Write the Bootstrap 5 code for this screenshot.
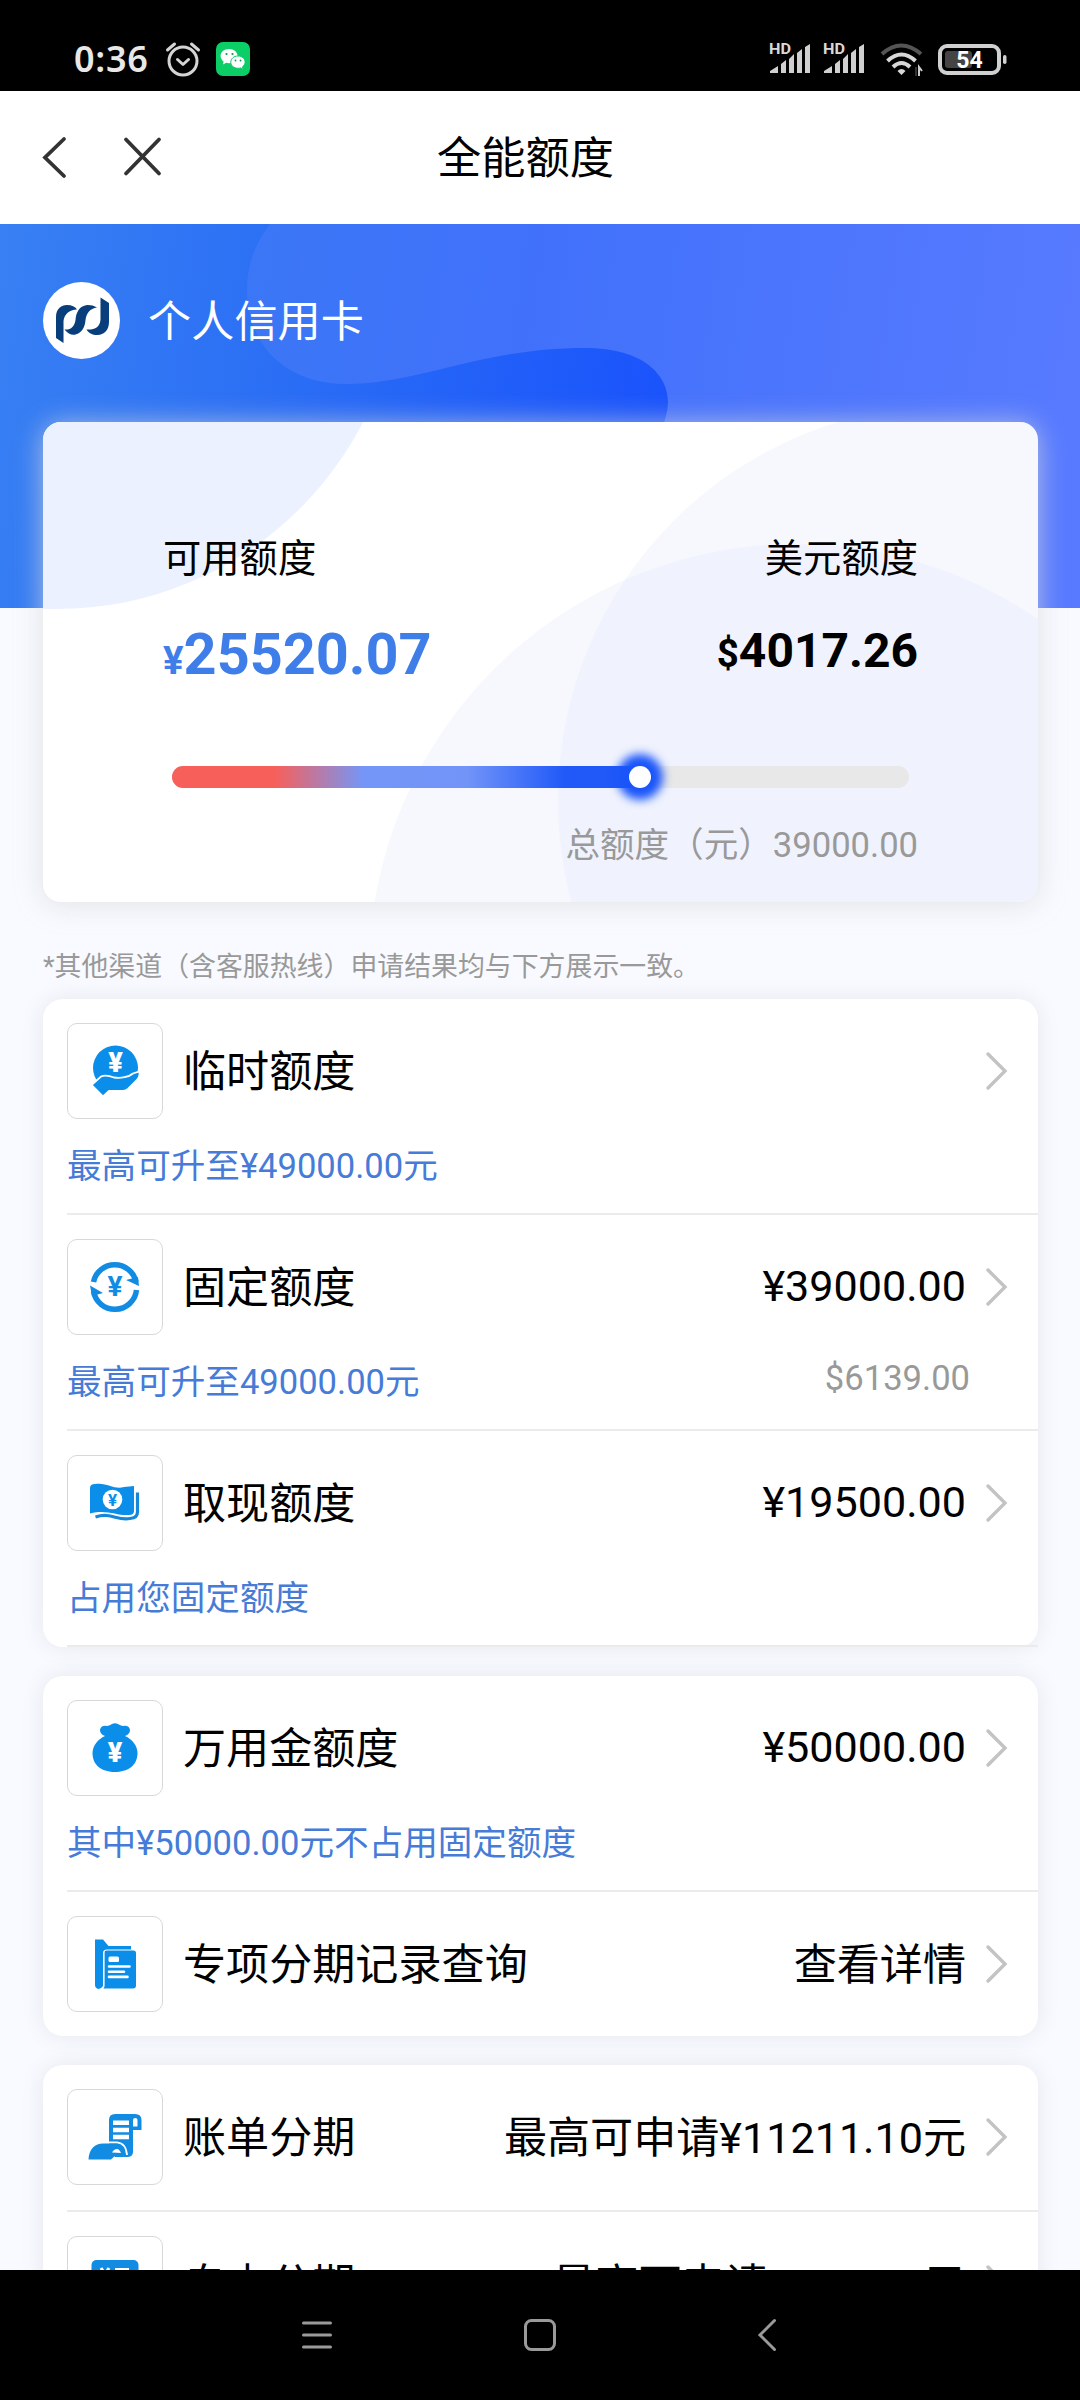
<!DOCTYPE html>
<html lang="zh-CN">
<head>
<meta charset="utf-8">
<meta name="viewport" content="width=device-width, initial-scale=1">
<title>全能额度</title>
<link rel="stylesheet" href="https://cdn.jsdelivr.net/npm/bootstrap@5.3.0/dist/css/bootstrap.min.css">
<style>
  body { font-family: Roboto, "Noto Sans CJK SC", sans-serif; color: #000; background: #f8faff; }
  svg { display: block; flex: none; overflow: visible; }
  .screen { width: 1080px; height: 2400px; }
  .status { height: 91px; padding: 27px 75px 0 74px; }
  .clock { font: 600 36px/36px "Noto Sans", sans-serif; color: #e8e8e8; letter-spacing: .7px; width: 91px; }
  .topbar { height: 133px; padding: 0 40px; }
  .topbar .title { font-size: 44.2px; line-height: 60px; left: 0; right: 29px; top: 38px; }
  .viewport { min-height: 0; }
  .hero { height: 384px; background: linear-gradient(98deg, #3880f3 0%, #2a6df5 28%, #1a53fc 61%, #1a53fc 100%); }
  .hero-wave { left: 0; top: 0; }
  .owner { padding: 58px 43px 0; gap: 28px; font-size: 43.2px; line-height: 81px; }
  .quota { margin: -186px 42px 0 43px; height: 480px; border-radius: 18px; box-shadow: 0 2px 28px rgba(218,218,220,.75); padding: 113px 120px 0; }
  .quota-art { left: 0; top: 0; border-radius: 18px; overflow: hidden; }
  .caption-lg { font-size: 38.3px; line-height: 48px; }
  .sum { line-height: 60px; font-weight: 700; }
  .sum-cny { font-size: 57.6px; color: #3f7ee8; margin-top: 42px; }
  .sum-usd { font-size: 48px; margin-top: 38px; }
  .sum small { font-size: 38.4px; font-weight: 700; }
  .track { height: 22px; margin: 0 9px; border-radius: 11px; background: #e8e8e8; }
  .fill { height: 22px; border-radius: 11px 0 0 11px; background: linear-gradient(90deg, #f7605a 22%, #7496f8 41%, #7294f8 63%, #2059f8 84%); }
  .thumb { width: 22px; height: 22px; border-radius: 50%; background: #fff; right: -11px; top: 0; box-shadow: 0 0 10px 12px #1a55fa; }
  .total { font-size: 34.6px; line-height: 46px; color: #999; margin-top: 34px; }
  .notice { font-size: 26.9px; line-height: 36px; color: #999; margin: 47px 43px 14px; }
  .group { margin: 0 42px 29px 43px; border-radius: 20px; box-shadow: 0 0 24px rgba(0,0,0,.08); padding-left: 24px; }
  .entry { padding-top: 24px; border-bottom: 2px solid #ebebeb; }
  .entry.tall { height: 216px; }
  .entry.short { height: 147px; }
  .entry.last { height: 144px; border-bottom: 0; }
  .entry-main { height: 96px; padding-right: 29px; font-size: 43.1px; }
  .tile { width: 96px; height: 96px; border: 1px solid #d8d8d8; border-radius: 10px; margin-right: 20px; }
  .tile svg { margin: -1px; }
  .entry-main span { line-height: 60px; padding-top: 4px; }
  .entry-main .amount { margin-right: 19px; }
  .entry-main .num { padding-top: 0; }
  .hint { font-size: 34.6px; line-height: 46px; margin-top: 24px; color: #467bd8; padding-right: 68px; }
  .hint .usd { color: #999; line-height: 39px; }
  .navkeys { height: 130px; }
  .navkeys svg { height: 130px; }
</style>
</head>
<body>
<svg width="0" height="0" class="position-absolute">
  <defs>
    <symbol id="chev" viewBox="0 0 24 42"><path d="M3 4L20 21L3 38" fill="none" stroke="#c3c3c3" stroke-width="3.4" stroke-linecap="round"/></symbol>
    <symbol id="bars" viewBox="0 0 42 34">
      <text x="0" y="12" font-family="Roboto" font-weight="700" font-size="15.5" fill="#d8d8d8" textLength="22" lengthAdjust="spacingAndGlyphs">HD</text>
      <path d="M1 31V29L9 24V31zM12 31V22L17 18V31zM20 31V17L25 12V31zM28 31V11L33 7V31zM36 31V5L41 2V31z" fill="#d0d0d0"/>
    </symbol>
  </defs>
</svg>

<div class="screen d-flex flex-column overflow-hidden">
  <div class="status bg-black d-flex align-items-center flex-shrink-0">
    <div class="clock">0:36</div>
    <svg width="36" height="36" viewBox="0 0 36 36" fill="none" stroke="#d4d4d4" stroke-width="3" stroke-linecap="round" stroke-linejoin="round"><circle cx="18" cy="20" r="14"/><path d="M12.500 18.500L18 23.500L23.500 18.500M2.500 9L9.500 3M33.500 9L26.500 3"/></svg>
    <svg style="margin-left:15px" width="34" height="34" viewBox="0 0 34 34"><rect width="34" height="34" rx="7" fill="#0bce66"/>
      <path d="M13 7C8 7 4.600 10 4.600 14c0 2.300 1.300 4.200 3 5.500l-.6 3 3.200-1.700c1 .3 2 .4 3 .4 5 0 8.500-3 8.500-7S18 7 13 7z" fill="#fff"/>
      <path d="M22 14c-4.300 0-7.200 2.700-7.200 6.100S17.700 26.300 22 26.300c.9 0 1.800-.1 2.600-.4l2.500 1.500-.6-2.600c1.600-1.200 2.600-2.800 2.600-4.700C29.100 16.700 26.200 14 22 14z" fill="#fff" stroke="#0bce66" stroke-width="1"/>
      <g fill="#0a9a50"><circle cx="10.500" cy="12" r="1.100"/><circle cx="16.500" cy="12" r="1.100"/><circle cx="19.500" cy="18.500" r=".9"/><circle cx="24.500" cy="18.500" r=".9"/></g></svg>
    <div class="d-flex align-items-center ms-auto">
      <svg width="42" height="34"><use href="#bars"/></svg>
      <svg width="42" height="34" style="margin-left:12px"><use href="#bars"/></svg>
      <svg style="margin-left:15px" width="44" height="34" viewBox="0 0 44 34" fill="none" stroke-width="4">
        <path d="M2 12Q21 -5 41 12" stroke="#555"/><path d="M7.500 19Q21.500 6 35.500 19" stroke="#d8d8d8"/><path d="M13 25Q21.500 17 30 25" stroke="#d8d8d8"/><path d="M21.500 33l-4-4q4-4 8 0z" fill="#d8d8d8"/><path d="M36 25v9" stroke="#444" stroke-width="1.500"/><path d="M39 34V25l3 4" stroke="#ccc" stroke-width="2"/></svg>
      <svg style="margin-left:14px" width="67" height="34" viewBox="0 0 67 34"><rect x="2" y="4" width="59" height="27" rx="7" fill="none" stroke="#d0d0d0" stroke-width="4"/><rect x="7" y="9" width="27" height="17" rx="3" fill="#444"/><rect x="65" y="13" width="3.500" height="9" rx="1.700" fill="#d0d0d0"/>
        <text x="31.500" y="25.500" text-anchor="middle" font-family="Roboto" font-weight="700" font-size="23" fill="#fff">54</text></svg>
    </div>
  </div>

  <header class="topbar bg-white position-relative d-flex align-items-center flex-shrink-0">
    <svg width="28" height="44" viewBox="0 0 28 44"><path d="M24 3L5 21.500L24 40" fill="none" stroke="#333" stroke-width="3.800" stroke-linecap="round"/></svg>
    <svg style="margin-left:54px" width="42" height="42" viewBox="0 0 42 42"><path d="M4 2.500L37 36.500M37 2.500L4 36.500" fill="none" stroke="#333" stroke-width="3.800" stroke-linecap="round"/></svg>
    <div class="title position-absolute text-center">全能额度</div>
  </header>

  <main class="viewport flex-grow-1 overflow-hidden">
    <section class="hero position-relative">
      <svg class="hero-wave position-absolute" width="1080" height="384" viewBox="0 0 1080 384">
        <defs><linearGradient id="wave" x1="240" y1="0" x2="1080" y2="120" gradientUnits="userSpaceOnUse"><stop offset="0" stop-color="#3a77f5"/><stop offset=".35" stop-color="#4171fb"/><stop offset="1" stop-color="#577aff"/></linearGradient></defs>
        <path d="M270 0C252 24 247 45 247 68C248 125 290 160 345 160C420 160 480 124 585 124C645 124 668 152 668 178Q668 190 660 210L620 384H1080V0Z" fill="url(#wave)"/>
      </svg>
      <div class="owner position-relative d-flex text-white">
        <svg width="77" height="77" viewBox="0 0 77 77"><circle cx="38.500" cy="38.500" r="38.500" fill="#fff"/>
          <g fill="#083e7c"><path d="M13 35C13 27 18 23 24 23C29 23 32 24.500 34 27.500C26 28 21.500 32 20.500 39V61L13 56Z"/>
          <path d="M54 25.500C51 23.500 47 22.800 44 23C36 24 33 31 32.500 38C31.500 44.500 28 48 21.500 47.500C25 52 29 53.500 32.500 52.500C39 51 42 45 42.500 38C43.500 31 47 26.500 54 25.500Z"/>
          <path d="M57.500 15.500L66 21V40C66 48 61 53 54.500 53C49 53 45.500 51 43.500 47.500C52 48 57 45 57.500 37.500Z"/></g></svg>
        <div>个人信用卡</div>
      </div>
    </section>

    <section class="quota position-relative bg-white">
      <svg class="quota-art position-absolute" width="995" height="480" viewBox="43 422 995 480">
        <circle cx="57" cy="265" r="344" fill="#ebf1fe"/>
        <circle cx="796" cy="971" r="427" fill="#e6ecfc" fill-opacity=".36"/>
        <circle cx="953" cy="800" r="395" fill="#e6ecfc" fill-opacity=".36"/>
      </svg>
      <div class="position-relative">
        <div class="d-flex justify-content-between" style="height:231px">
          <div><div class="caption-lg">可用额度</div><div class="sum sum-cny"><small>¥</small>25520.07</div></div>
          <div class="text-end"><div class="caption-lg">美元额度</div><div class="sum sum-usd"><small>$</small>4017.26</div></div>
        </div>
        <div class="track"><div class="fill position-relative" style="width:63.500%"><div class="thumb position-absolute"></div></div></div>
        <div class="total text-end">总额度（元）39000.00</div>
      </div>
    </section>

    <p class="notice">*其他渠道（含客服热线）申请结果均与下方展示一致。</p>

    <section class="group bg-white">
      <div class="entry tall">
        <div class="entry-main d-flex align-items-center">
          <div class="tile"><svg width="96" height="96" viewBox="0 0 96 96"><circle cx="48.500" cy="45" r="22.500" fill="#0a8ee9"/><path d="M24.500 62L34 53.500Q39 51.500 47 54.500C54 55.500 62 54 66 50.500L72.500 48.500Q73 54 70 57L61 66Q59 68 56 68H42L36 73.500Z" fill="#0a8ee9" stroke="#fff" stroke-width="1.800"/><text x="48.500" y="49" text-anchor="middle" font-family="Roboto" font-weight="900" font-size="27" fill="#fff">¥</text></svg></div>
          <span>临时额度</span><svg class="ms-auto" width="24" height="42"><use href="#chev"/></svg>
        </div>
        <div class="hint">最高可升至¥49000.00元</div>
      </div>
      <div class="entry tall">
        <div class="entry-main d-flex align-items-center">
          <div class="tile"><svg width="96" height="96" viewBox="0 0 96 96"><g fill="none" stroke="#128ce2" stroke-width="5.500"><path d="M26.500 43A21.700 21.700 0 0 1 69 43"/><path d="M69.500 51A21.700 21.700 0 0 1 26.500 52"/></g><path d="M72 47L59 41L71 38zM23 46.500L36 54L25 57z" fill="#128ce2"/><text x="48" y="57" text-anchor="middle" font-family="Roboto" font-weight="700" font-size="28" fill="#128ce2">¥</text></svg></div>
          <span>固定额度</span><span class="amount num ms-auto">¥39000.00</span><svg width="24" height="42"><use href="#chev"/></svg>
        </div>
        <div class="hint d-flex justify-content-between"><span>最高可升至49000.00元</span><span class="usd">$6139.00</span></div>
      </div>
      <div class="entry tall">
        <div class="entry-main d-flex align-items-center">
          <div class="tile"><svg width="96" height="96" viewBox="0 0 96 96"><path d="M23 33Q23 29 28 29C40 27 47 35 57 32L67 31V56Q67 60 62 60C50 61 40 54 23 58.500Z" fill="#0a8ee9"/><path d="M28.500 62C44 57 50 66 63 63.500Q70.500 63 70.500 57V37.500" fill="none" stroke="#1487da" stroke-width="3.200"/><circle cx="45.500" cy="44.500" r="9.800" fill="#fff"/><text x="45.500" y="50.500" text-anchor="middle" font-family="Roboto" font-weight="700" font-size="17" fill="#0a8ee9">¥</text></svg></div>
          <span>取现额度</span><span class="amount num ms-auto">¥19500.00</span><svg width="24" height="42"><use href="#chev"/></svg>
        </div>
        <div class="hint">占用您固定额度</div>
      </div>
    </section>

    <section class="group bg-white">
      <div class="entry tall">
        <div class="entry-main d-flex align-items-center">
          <div class="tile"><svg width="96" height="96" viewBox="0 0 96 96"><path d="M38 36Q33 34 33 30Q34 25 40 26Q43 25.500 45 24Q48 22.500 51 24Q53 25.500 56 26Q62 25 63 30Q63 34 58 36C65 39 70.500 46 70.500 53C70.500 66 60 72 48 72S25.500 66 25.500 53C25.500 46 31 39 38 36Z" fill="#0a8ee9"/><text x="48" y="61.500" text-anchor="middle" font-family="Roboto" font-weight="900" font-size="27" fill="#fff">¥</text></svg></div>
          <span>万用金额度</span><span class="amount num ms-auto">¥50000.00</span><svg width="24" height="42"><use href="#chev"/></svg>
        </div>
        <div class="hint">其中¥50000.00元不占用固定额度</div>
      </div>
      <div class="entry last">
        <div class="entry-main d-flex align-items-center">
          <div class="tile"><svg width="96" height="96" viewBox="0 0 96 96"><path d="M28 23.500H36L41.500 30H64V35H39Q36 35 36 38V70Q34 73 31.500 73Q28 72 28 69Z" fill="#0a8ee9"/><path d="M37.500 36.500Q37.500 34.500 40 34.500H66.500Q69 34.500 69 37V69.500Q69 72.500 66 72.500H36.500Q37.500 71 37.500 69Z" fill="#0a8ee9"/><path d="M36.600 71V37Q36.600 34 40 34H64" fill="none" stroke="#fff" stroke-width="1.200"/><rect x="41.500" y="40.500" width="10.500" height="5.500" rx="1.500" fill="#fff"/><path d="M42 50.500H62.500M42 55.700H57M42 60.900H60.500" stroke="#fff" stroke-width="2.600" stroke-linecap="round"/></svg></div>
          <span>专项分期记录查询</span><span class="amount ms-auto">查看详情</span><svg width="24" height="42"><use href="#chev"/></svg>
        </div>
      </div>
    </section>

    <section class="group bg-white">
      <div class="entry short">
        <div class="entry-main d-flex align-items-center">
          <div class="tile"><svg width="96" height="96" viewBox="0 0 96 96"><path d="M42 52V31Q42 25 48 25H68Q74.500 25 74.500 31V41H66V63Q66 68 60 68H48L42 60Z" fill="#128ce2"/><path d="M66 37.500V31Q66 29 68.300 29T70.500 31V37.500Z" fill="#fff"/><path d="M46 33.700H62M46 41H62M46 48H62" stroke="#fff" stroke-width="4.600"/><path d="M21.500 70.500C22 60 28 54.500 36 54.500H50Q57 55 58 62V66H49L44 70.500Z" fill="#128ce2"/><path d="M41.500 53.300H50Q59 54 60 66" fill="none" stroke="#fff" stroke-width="1.800"/><path d="M45 63.500Q47 59.500 51 60Q53.500 62 54 64Z" fill="#fff"/></svg></div>
          <span>账单分期</span><span class="amount ms-auto">最高可申请¥11211.10元</span><svg width="24" height="42"><use href="#chev"/></svg>
        </div>
      </div>
      <div class="entry short">
        <div class="entry-main d-flex align-items-center">
          <div class="tile"><svg width="96" height="96" viewBox="0 0 96 96"><rect x="24.500" y="24" width="47" height="48" rx="5" fill="#128ce2"/><path d="M34 32L38 38L42 32M38 38V50M48 33.500H62" fill="none" stroke="#fff" stroke-width="3"/></svg></div>
          <span>自由分期</span><span class="amount ms-auto">最高可申请¥300.00元</span><svg width="24" height="42"><use href="#chev"/></svg>
        </div>
      </div>
    </section>
  </main>

  <footer class="navkeys bg-black flex-shrink-0">
    <svg width="1080" height="130" viewBox="0 0 1080 130" fill="none" stroke="#9a9a9a" stroke-width="3" stroke-linecap="round"><path d="M303.500 53H330.500M303.500 65H330.500M303.500 77H330.500"/><rect x="525.500" y="50.500" width="29" height="29" rx="6"/><path d="M774.500 50.500L760 65L774.500 79.500"/></svg>
  </footer>
</div>
<script src="https://cdn.jsdelivr.net/npm/bootstrap@5.3.0/dist/js/bootstrap.bundle.min.js"></script>
</body>
</html>
